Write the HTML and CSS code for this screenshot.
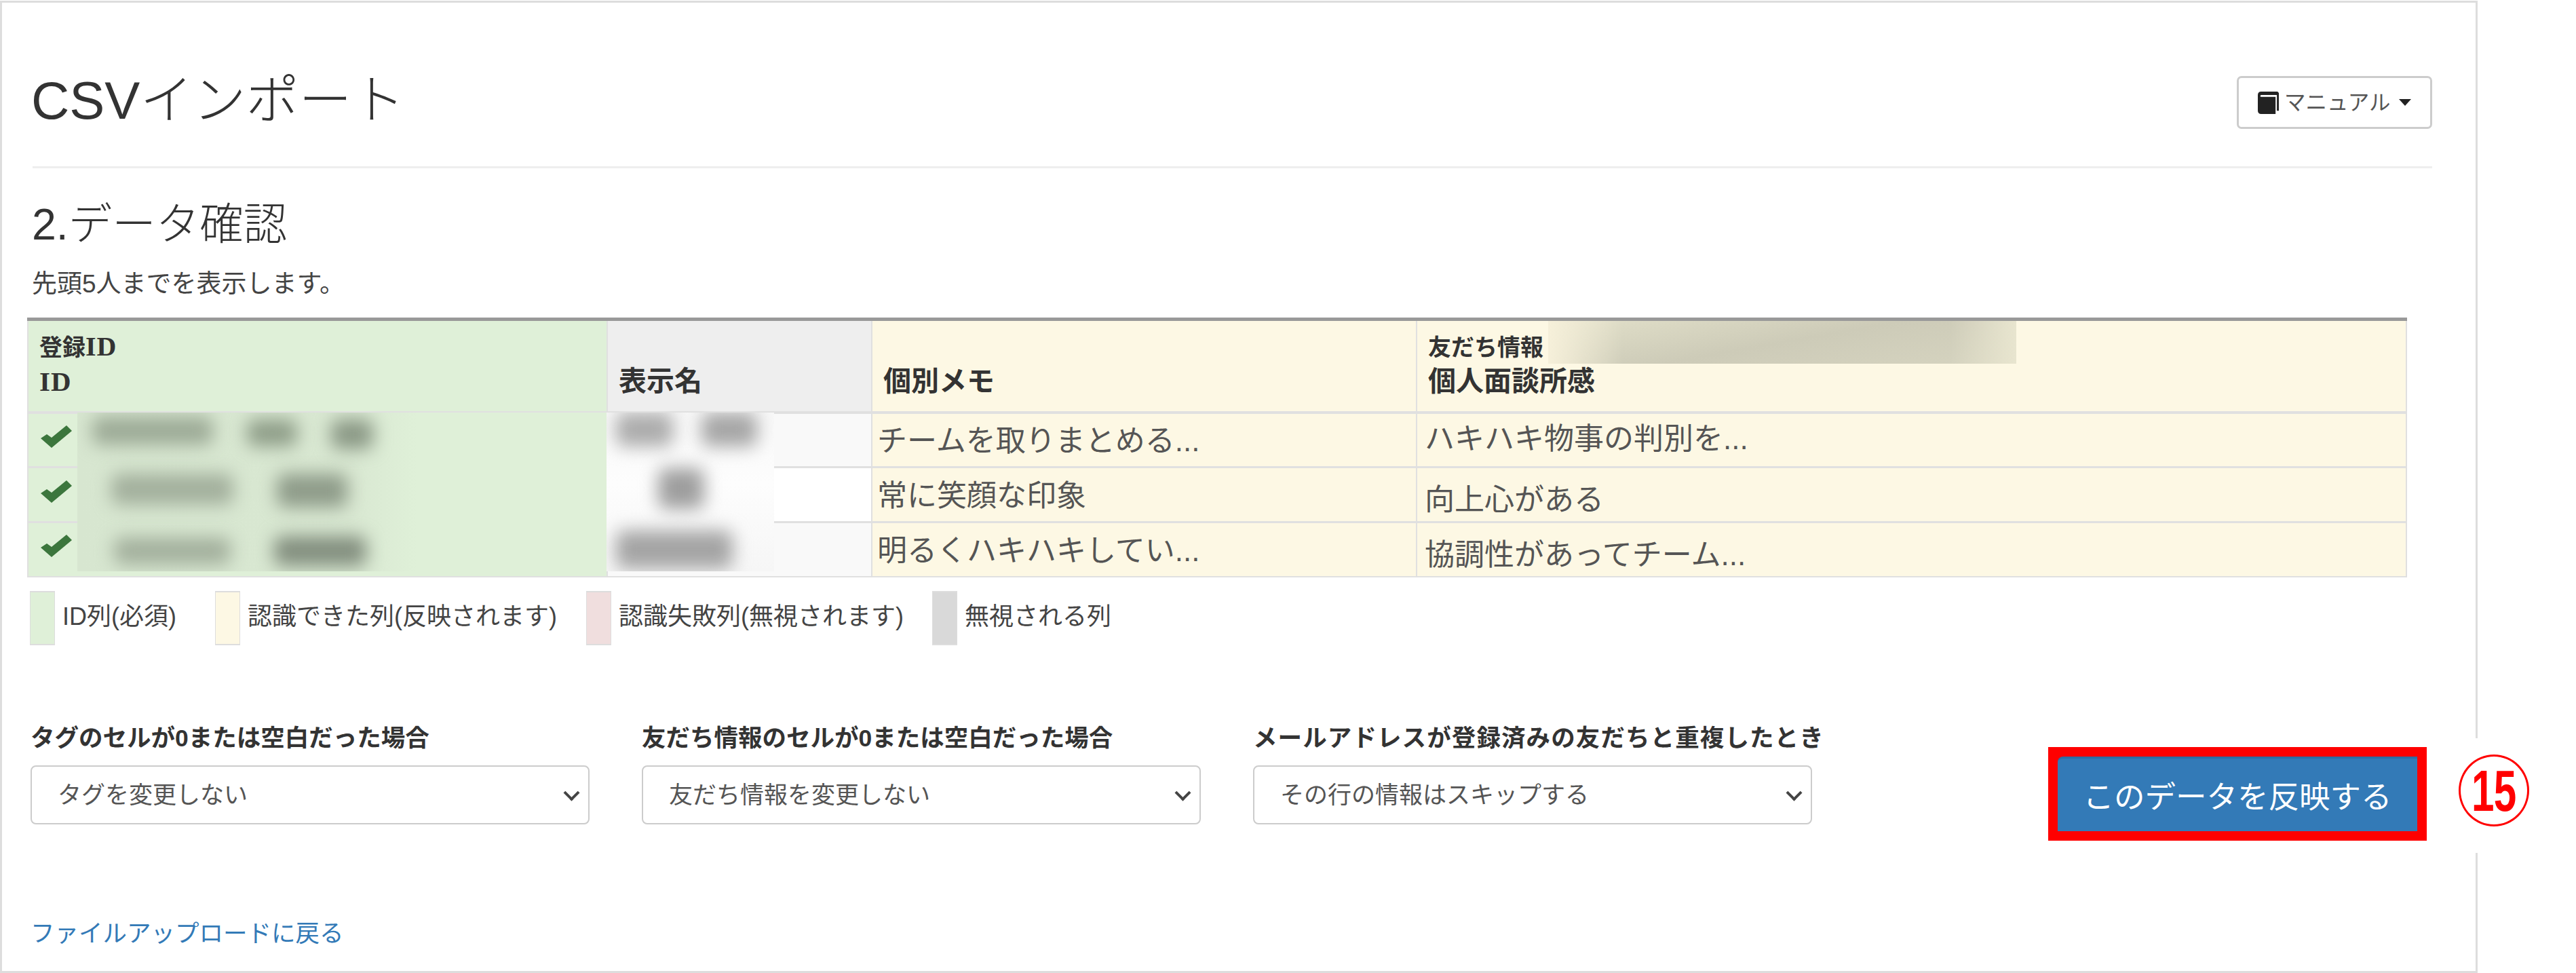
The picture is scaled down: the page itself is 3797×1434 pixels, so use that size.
FILE: index.html
```html
<!DOCTYPE html>
<html lang="ja">
<head>
    <meta charset="UTF-8">
    <meta name="viewport" content="width=device-width, initial-scale=1.0">
    <title>CSVインポート</title>
    <link rel="stylesheet" href="styles.css">
</head>
<body>
    <div class="panel">
        <!-- ページ見出し -->
        <header class="page-head">
            <h1>CSVインポート</h1>
            <button type="button" class="manual-btn">
                <svg class="book" viewBox="0 0 32 34"><path d="M5 0h25l2 2v27h-3V5H6C3 5 3 8 6 8h21v26H5c-3 0-5-2-5-5V5c0-3 2-5 5-5z"/></svg>
                <span>マニュアル</span>
                <i class="caret"></i>
            </button>
        </header>

        <h2>2.データ確認</h2>
        <p class="lead">先頭5人までを表示します。</p>

        <!-- プレビュー -->
        <div class="table-wrap">
            <table class="preview">
                <colgroup>
                    <col class="col-id">
                    <col class="col-name">
                    <col class="col-memo">
                    <col class="col-info">
                </colgroup>
                <thead>
                    <tr>
                        <th class="is-id"><small>登録<span class="serif">ID</span></small><span class="serif">ID</span></th>
                        <th class="is-ignored">表示名</th>
                        <th class="is-ok">個別メモ</th>
                        <th class="is-ok"><small>友だち情報</small>個人面談所感</th>
                    </tr>
                </thead>
                <tbody>
                    <tr>
                        <td class="is-id"><svg class="check" viewBox="0 0 46 33"><path d="M0 19L9 13L16 18L38 0L46 8L16 33z"/></svg></td>
                        <td class="plain"></td>
                        <td class="is-ok memo">チームを取りまとめる...</td>
                        <td class="is-ok info up">ハキハキ物事の判別を...</td>
                    </tr>
                    <tr>
                        <td class="is-id"><svg class="check" viewBox="0 0 46 33"><path d="M0 19L9 13L16 18L38 0L46 8L16 33z"/></svg></td>
                        <td class="plain"></td>
                        <td class="is-ok memo">常に笑顔な印象</td>
                        <td class="is-ok info down">向上心がある</td>
                    </tr>
                    <tr>
                        <td class="is-id"><svg class="check" viewBox="0 0 46 33"><path d="M0 19L9 13L16 18L38 0L46 8L16 33z"/></svg></td>
                        <td class="plain"></td>
                        <td class="is-ok memo">明るくハキハキしてい...</td>
                        <td class="is-ok info down">協調性があってチーム...</td>
                    </tr>
                </tbody>
            </table>

            <!-- ぼかし -->
            <div class="mask mask-id">
                <b class="blob b1"></b><b class="blob b2"></b><b class="blob b3"></b>
                <b class="blob b4"></b><b class="blob b5"></b>
                <b class="blob b6"></b><b class="blob b7"></b>
            </div>
            <div class="mask mask-name">
                <b class="blob n1"></b><b class="blob n2"></b><b class="blob n3"></b><b class="blob n4"></b>
            </div>
            <div class="mask mask-head"></div>
        </div>

        <ul class="legend">
            <li class="legend-id">ID列(必須)</li>
            <li class="legend-ok">認識できた列(反映されます)</li>
            <li class="legend-ng">認識失敗列(無視されます)</li>
            <li class="legend-ignored">無視される列</li>
        </ul>

        <!-- 反映オプション -->
        <form class="options">
            <div class="field">
                <label for="tag_empty">タグのセルが0または空白だった場合</label>
                <div class="select-wrap"><select id="tag_empty"><option>タグを変更しない</option></select></div>
            </div>
            <div class="field">
                <label for="info_empty">友だち情報のセルが0または空白だった場合</label>
                <div class="select-wrap"><select id="info_empty"><option>友だち情報を変更しない</option></select></div>
            </div>
            <div class="field">
                <label for="mail_dup" class="label-wide">メールアドレスが登録済みの友だちと重複したとき</label>
                <div class="select-wrap"><select id="mail_dup"><option>その行の情報はスキップする</option></select></div>
            </div>
            <div class="submit-box">
                <button type="submit" class="submit">このデータを反映する</button>
            </div>
        </form>

        <a href="#" class="back-link">ファイルアップロードに戻る</a>
    </div>

    <!-- 注釈番号 -->
    <div class="callout"><span class="callout-num"><span>15</span></span></div>
</body>
</html>
```

FILE: styles.css
```css
* {
    box-sizing: border-box;
}

body {
    margin: 0;
    height: 1434px;
    width: 3797px;
    background: #fff;
    color: #333;
    font-family: "Liberation Sans", "Noto Sans CJK JP", sans-serif;
    font-size: 35.5px;
    position: relative;
    overflow: hidden;
}

.panel {
    width: 3652px;
    height: 1433px;
    margin-top: 1px;
    padding: 0 64px 0 40px;
    border: 3px solid #ddd;
}

.page-head {
    display: flex;
    justify-content: space-between;
    align-items: flex-start;
    height: 244px;
    padding-top: 108px;
    border-bottom: 3px solid #eee;
    margin-left: 5px;
}

h1 {
    margin: 0 0 0 -2px;
    font-size: 78px;
    line-height: 72px;
    font-weight: 300;
}

.manual-btn {
    display: flex;
    align-items: center;
    gap: 8px;
    width: 288px;
    height: 78px;
    padding: 0 0 0 28px;
    background: #fff;
    border: 3px solid #ccc;
    border-radius: 7px;
    color: #555;
    font: inherit;
    font-size: 31.5px;
}

.manual-btn span {
    margin-bottom: 7px;
}

.book {
    width: 31px;
    height: 33px;
    fill: #222;
}

.caret {
    width: 0;
    height: 0;
    margin-left: 4px;
    border-top: 10px solid #222;
    border-left: 9px solid transparent;
    border-right: 9px solid transparent;
}

h2 {
    margin: 46px 0 0 4px;
    font-size: 64.5px;
    line-height: 74px;
    font-weight: 300;
}

.lead {
    margin: 31px 0 0 4px;
    font-size: 37px;
    line-height: 40px;
    color: #444;
}

/* テーブル */
.table-wrap {
    position: relative;
    width: 3508px;
    margin-top: 29px;
    margin-left: -3px;
}

.preview {
    width: 100%;
    table-layout: fixed;
    border-collapse: collapse;
}

.col-id { width: 854px; }
.col-name { width: 390px; }
.col-memo { width: 803px; }

.preview th,
.preview td {
    border: 2px solid #e0e0e0;
}

.preview tbody td {
    border-top-width: 3px;
    border-bottom-width: 3px;
}

.preview th {
    height: 137px;
    padding: 0 16px 21px;
    text-align: left;
    vertical-align: bottom;
    font-size: 41px;
    line-height: 46px;
    border-top: 5px solid #999;
    border-bottom-width: 4px;
}

.preview th small {
    display: block;
    font-size: 34px;
    line-height: 42px;
    margin-bottom: 6px;
}

.preview th small .serif {
    font-size: 40px;
}

.serif {
    font-family: "Liberation Serif", serif;
    letter-spacing: 1px;
}

.preview td {
    height: 81px;
    padding: 0 10px;
    font-size: 44px;
    color: #555;
    white-space: nowrap;
    overflow: hidden;
}

.preview tbody tr:last-child td {
    height: 80px;
    border-bottom-width: 2px;
}

.is-id { background: #dff0d8; }
.is-ignored { background: #eee; }
.is-ok { background: #fdf8e4; }

.plain { background: #f9f9f9; }
.preview tbody tr:nth-child(2) .plain { background: #fff; }

.preview td.is-id {
    padding-left: 18px;
    padding-bottom: 10px;
}

.check {
    display: block;
    width: 46px;
    height: 33px;
    fill: #3c763d;
}

.preview td.memo {
    padding-left: 7px;
    padding-bottom: 4px;
}

.preview td.info {
    padding-left: 11px;
}

.preview td.up {
    padding-bottom: 10px;
}

.preview td.down {
    padding-top: 8px;
}

.mask {
    position: absolute;
    overflow: hidden;
}

.mask-id {
    left: 74px;
    top: 140px;
    width: 780px;
    height: 234px;
    background: linear-gradient(to right, #d7e6d0, #d9e8d2 52%, #dff0d8 64%);
}

.mask-name {
    left: 854px;
    top: 140px;
    width: 247px;
    height: 234px;
    background: linear-gradient(to bottom, #f8f8f8, #fdfdfd 45%, #f6f6f6);
}

.mask-head {
    left: 2242px;
    top: 5px;
    width: 690px;
    height: 63px;
    background:
        linear-gradient(to right, #f6f0da, rgba(246, 240, 218, 0) 16%, rgba(230, 227, 205, 0) 86%, #e8e5cf),
        linear-gradient(170deg, #e0dec8 5%, #cdcbb8 50%, #d6d4c0 100%);
}

.blob {
    position: absolute;
    display: block;
    filter: blur(13px);
    background: #8f9e89;
    border-radius: 12px;
}

.b1 { left: 22px; top: 6px; width: 178px; height: 42px; background: #9dab97; }
.b2 { left: 250px; top: 10px; width: 74px; height: 40px; }
.b3 { left: 374px; top: 10px; width: 62px; height: 44px; background: #8b9986; }
.b4 { left: 50px; top: 90px; width: 180px; height: 46px; background: #a3b09d; }
.b5 { left: 294px; top: 90px; width: 104px; height: 50px; background: #8f9c8a; }
.b6 { left: 54px; top: 184px; width: 172px; height: 40px; background: #a3b09d; }
.b7 { left: 290px; top: 182px; width: 136px; height: 44px; background: #838f7f; }

.n1 { left: 14px; top: 0; width: 84px; height: 50px; background: #acacac; }
.n2 { left: 140px; top: 0; width: 82px; height: 50px; background: #a6a6a6; }
.n3 { left: 76px; top: 82px; width: 68px; height: 60px; background: #9e9e9e; }
.n4 { left: 14px; top: 174px; width: 172px; height: 56px; background: #a4a4a4; }

/* 凡例 */
.legend {
    display: flex;
    margin: 20px 0 0 1px;
    padding: 0;
    list-style: none;
    color: #444;
    font-size: 36px;
    line-height: 76px;
}

.legend li {
    position: relative;
    padding-left: 48px;
    height: 76px;
}

.legend li::before {
    content: "";
    position: absolute;
    left: 0;
    top: 0;
    width: 35px;
    height: 76px;
    border: solid #ddd;
    border-width: 2px 1px;
}

.legend-id { margin-right: 57px; }
.legend-ok { margin-right: 43px; }
.legend-ng { margin-right: 42px; }

.legend-id::before { background: #dff0d8; }
.legend-ok::before { background: #fdf8e4; }
.legend-ng::before { background: #f0dede; }
.legend-ignored::before { background: #d9d9d9; }

/* オプション */
.options {
    display: flex;
    align-items: flex-start;
    margin: 120px 0 0 2px;
}

.field {
    width: 824px;
    margin-right: 77px;
}

.field label {
    display: block;
    font-weight: bold;
    line-height: 42px;
    height: 61px;
    white-space: nowrap;
}

.field .label-wide {
    letter-spacing: 1.1px;
}

.select-wrap {
    position: relative;
}

.select-wrap::after {
    content: "";
    position: absolute;
    right: 18px;
    top: 32px;
    width: 13px;
    height: 13px;
    border: solid #444;
    border-width: 0 4px 4px 0;
    transform: rotate(45deg);
}

.field select {
    display: block;
    width: 100%;
    height: 87px;
    padding: 0 0 0 38px;
    background: #fff;
    border: 2px solid #ccc;
    border-radius: 8px;
    color: #555;
    font: inherit;
    font-size: 35px;
    appearance: none;
}

.submit-box {
    margin: 34px 0 0 271px;
    padding: 14px;
    background: #f00;
}

.submit {
    display: block;
    width: 530px;
    height: 110px;
    padding: 0;
    background: #337ab7;
    border: none;
    border-top: 3px solid #2e6da4;
    border-radius: 8px 0 0 0;
    color: #fff;
    font: inherit;
    font-size: 45.5px;
}

.back-link {
    display: block;
    margin: 116px 0 0 2px;
    color: #337ab7;
    text-decoration: none;
    line-height: 42px;
}

/* 注釈 */
.callout {
    position: absolute;
    left: 3590px;
    top: 1088px;
    width: 170px;
    height: 169px;
    background: #fff;
}

.callout-num {
    position: absolute;
    left: 34px;
    top: 24px;
    display: flex;
    align-items: center;
    justify-content: center;
    width: 104px;
    height: 106px;
    border: 3px solid #f00;
    border-radius: 50%;
    color: #f00;
    font-weight: bold;
    font-size: 86px;
}

.callout-num span {
    display: block;
    transform: scaleX(0.7);
    letter-spacing: -1px;
}
```
